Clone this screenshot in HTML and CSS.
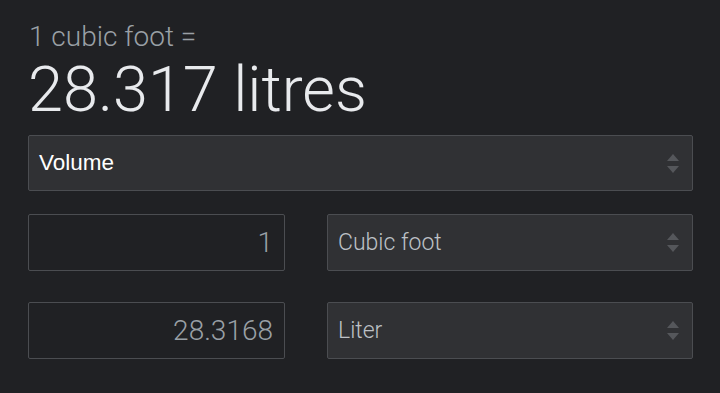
FILE: index.html
```html
<!DOCTYPE html>
<html>
<head>
<meta charset="utf-8">
<link rel="stylesheet" href="styles.css">
</head>
<body>
<div class="wrap">
  <div class="eq">1 cubic foot =</div>
  <div class="result">28.317 litres</div>
  <div class="select main">
    <span class="label">Volume</span>
    <svg class="arrows" width="12" height="19" viewBox="0 0 12 19"><polygon points="6,0 12,7 0,7"/><polygon points="0,12 12,12 6,19"/></svg>
  </div>
  <div class="grid">
    <div class="input">1</div>
    <div class="select unit">
      <span class="label">Cubic foot</span>
      <svg class="arrows" width="12" height="19" viewBox="0 0 12 19"><polygon points="6,0 12,7 0,7"/><polygon points="0,12 12,12 6,19"/></svg>
    </div>
    <div class="input">28.3168</div>
    <div class="select unit">
      <span class="label">Liter</span>
      <svg class="arrows" width="12" height="19" viewBox="0 0 12 19"><polygon points="6,0 12,7 0,7"/><polygon points="0,12 12,12 6,19"/></svg>
    </div>
  </div>
</div>
</body>
</html>
```

FILE: styles.css
```css
html, body {
  margin: 0;
  padding: 0;
  background: #202124;
}
body {
  font-family: Roboto, "Liberation Sans", sans-serif;
}
.wrap {
  width: 665px;
  padding: 18px 0 0 28px;
}
.eq {
  font-size: 28px;
  line-height: 38px;
  font-weight: 300;
  color: #9aa0a6;
  padding-left: 1px;
}
.result {
  margin-top: 2px;
  font-size: 63px;
  line-height: 64px;
  font-weight: 300;
  color: #e8eaed;
}
.select {
  box-sizing: border-box;
  display: flex;
  align-items: center;
  justify-content: space-between;
  background: #303134;
  border: 1px solid #4b4d51;
  border-radius: 2px;
  padding: 0 13px 0 10px;
}
.select.main {
  margin-top: 13px;
  height: 56px;
}
.select.main .label {
  font-family: "Liberation Sans", Arial, sans-serif;
  font-size: 22.5px;
  color: #ffffff;
}
.select.unit .label {
  font-size: 23px;
  font-weight: 300;
  color: #bdc1c6;
}
.arrows {
  fill: #55575b;
  display: block;
}
.grid {
  margin-top: 23px;
  display: grid;
  grid-template-columns: 257px 366px;
  grid-auto-rows: 57px;
  column-gap: 42px;
  row-gap: 31px;
}
.input {
  box-sizing: border-box;
  display: flex;
  align-items: center;
  justify-content: flex-end;
  border: 1px solid #4b4d51;
  border-radius: 2px;
  padding-right: 11px;
  font-size: 28px;
  font-weight: 300;
  color: #9aa0a6;
}
.select.unit {
  height: 57px;
}
```
